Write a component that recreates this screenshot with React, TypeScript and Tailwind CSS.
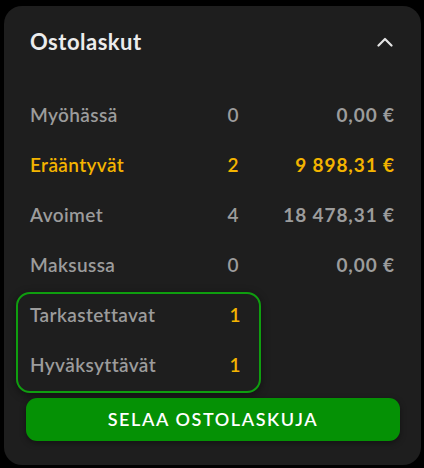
import React from 'react';

type Row = { label: string; count: number; amount?: string; highlight?: boolean };

const rows: Row[] = [
  { label: 'Myöhässä', count: 0, amount: '0,00 €' },
  { label: 'Erääntyvät', count: 2, amount: '9 898,31 €', highlight: true },
  { label: 'Avoimet', count: 4, amount: '18 478,31 €' },
  { label: 'Maksussa', count: 0, amount: '0,00 €' },
];

const pending: Row[] = [
  { label: 'Tarkastettavat', count: 1 },
  { label: 'Hyväksyttävät', count: 1 },
];

function ChevronUp() {
  return (
    <svg width="16" height="10" viewBox="0 0 16 10" fill="none">
      <path d="M1.5 8.5L8 2L14.5 8.5" stroke="#e4e4e4" strokeWidth="2.2" strokeLinecap="round" strokeLinejoin="round" />
    </svg>
  );
}

export default function App() {
  return (
    <div className="w-[424px] h-[468px] bg-black p-[6px_3px_3px_4px] font-['Lato',sans-serif]">
      <div className="h-full rounded-[18px] bg-[#1e1e1e] px-[26px] pt-[22px] pb-[24px] flex flex-col">
        {/* header */}
        <div className="flex items-center justify-between h-[26px]">
          <h2 className="text-[22px] font-bold text-[#ececec] tracking-[0.5px]">Ostolaskut</h2>
          <div className="mr-[2px] mt-[2px]">
            <ChevronUp />
          </div>
        </div>

        {/* totals */}
        <div className="mt-[36px] flex flex-col">
          {rows.map(r => (
            <div
              key={r.label}
              className={`h-[50px] flex items-center text-[19px] ${r.highlight ? 'text-[#f4b400]' : 'text-[#9c9c9c]'}`}
            >
              <span className="flex-1 font-semibold tracking-[0.4px]">{r.label}</span>
              <span className="w-[24px] text-center font-semibold">{r.count}</span>
              <span className="w-[150px] text-right font-bold tracking-[0.9px]">{r.amount}</span>
            </div>
          ))}
        </div>

        {/* waiting for action */}
        <div className="ml-[-14px] mt-[2px] w-[245px] rounded-[14px] border-2 border-[#0f9e0f] px-[12px] pb-[5px] shadow-[0_2px_8px_rgba(0,0,0,0.45)] flex flex-col gap-[8px]">
          {pending.map(r => (
            <div key={r.label} className="h-[42px] flex items-center text-[19px]">
              <span className="flex-1 font-semibold tracking-[0.4px] text-[#9c9c9c]">{r.label}</span>
              <span className="w-[24px] text-center font-semibold text-[#f4b400]">{r.count}</span>
            </div>
          ))}
        </div>

        <button className="mt-[5px] ml-[-4px] mr-[-5px] h-[44px] rounded-[11px] bg-[#059105] text-white text-[18px] font-semibold tracking-[1.6px] shadow-[0_2px_6px_rgba(0,0,0,0.4)]">
          SELAA OSTOLASKUJA
        </button>
      </div>
    </div>
  );
}
